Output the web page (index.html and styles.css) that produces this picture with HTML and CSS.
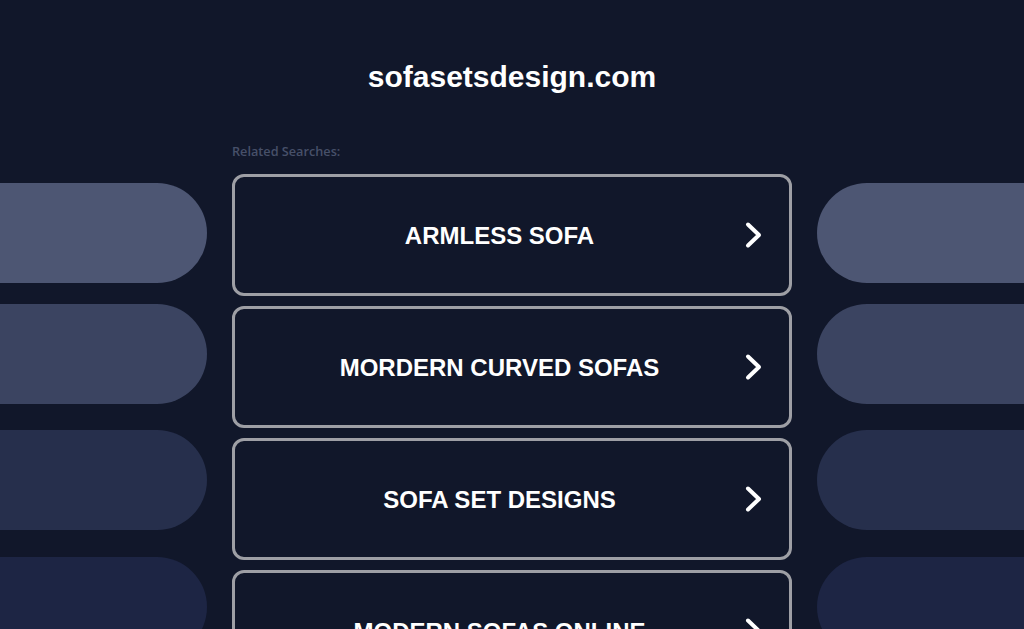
FILE: index.html
```html
<!DOCTYPE html>
<html lang="en">
<head>
<meta charset="utf-8">
<title>sofasetsdesign.com</title>
<link rel="stylesheet" href="styles.css">
</head>
<body>
<header class="header">
  <h1 class="domain">sofasetsdesign.com</h1>
</header>
<main class="layout">
  <p class="label">Related Searches:</p>
  <div class="pills pills-left">
    <div class="pill pill-1"></div>
    <div class="pill pill-2"></div>
    <div class="pill pill-3"></div>
    <div class="pill pill-4"></div>
  </div>
  <div class="links">
    <a class="link" href="#"><span class="link-text">ARMLESS SOFA</span><svg class="chev" width="20" height="28" viewBox="0 0 20 28"><path d="M4 3.5 L15 14 L4 24.5" fill="none" stroke="#fff" stroke-width="4" stroke-linecap="round" stroke-linejoin="round"/></svg></a>
    <a class="link" href="#"><span class="link-text">MORDERN CURVED SOFAS</span><svg class="chev" width="20" height="28" viewBox="0 0 20 28"><path d="M4 3.5 L15 14 L4 24.5" fill="none" stroke="#fff" stroke-width="4" stroke-linecap="round" stroke-linejoin="round"/></svg></a>
    <a class="link" href="#"><span class="link-text">SOFA SET DESIGNS</span><svg class="chev" width="20" height="28" viewBox="0 0 20 28"><path d="M4 3.5 L15 14 L4 24.5" fill="none" stroke="#fff" stroke-width="4" stroke-linecap="round" stroke-linejoin="round"/></svg></a>
    <a class="link" href="#"><span class="link-text">MODERN SOFAS ONLINE</span><svg class="chev" width="20" height="28" viewBox="0 0 20 28"><path d="M4 3.5 L15 14 L4 24.5" fill="none" stroke="#fff" stroke-width="4" stroke-linecap="round" stroke-linejoin="round"/></svg></a>
  </div>
  <div class="pills pills-right">
    <div class="pill pill-1"></div>
    <div class="pill pill-2"></div>
    <div class="pill pill-3"></div>
    <div class="pill pill-4"></div>
  </div>
</main>
</body>
</html>
```
FILE: styles.css
```css
html, body {
  margin: 0;
  padding: 0;
  height: 100%;
  overflow: hidden;
}
body {
  background: #11172a;
  font-family: "Liberation Sans", Arial, sans-serif;
  color: #fff;
}
.header {
  padding-top: 59px;
  text-align: center;
}
.domain {
  margin: 0;
  font-size: 30px;
  line-height: 36px;
  font-weight: bold;
  color: #fff;
}
.layout {
  display: grid;
  grid-template-columns: 207px 560px 207px;
  grid-template-rows: auto auto;
  column-gap: 25px;
  margin-top: 47px;
}
.label {
  grid-column: 2;
  grid-row: 1;
  margin: 0 0 14px 0;
  font-family: "Open Sans", "Liberation Sans", sans-serif;
  font-size: 12.7px;
  line-height: 18px;
  font-weight: 600;
  color: #475069;
}
.pills {
  grid-row: 2;
  display: flex;
  flex-direction: column;
  padding-top: 9px;
}
.pills-left { grid-column: 1; }
.pills-right { grid-column: 3; }
.pill {
  height: 100px;
  flex: none;
}
.pills-left .pill { border-radius: 0 50px 50px 0; }
.pills-right .pill { border-radius: 50px 0 0 50px; }
.pill-1 { background: #4d5673; }
.pill-2 { background: #3b4461; margin-top: 21px; }
.pill-3 { background: #262f4c; margin-top: 26px; }
.pill-4 { background: #1d2544; margin-top: 27px; }
.links {
  grid-column: 2;
  grid-row: 2;
  display: flex;
  flex-direction: column;
  gap: 10px;
}
.link {
  display: flex;
  align-items: center;
  height: 116px;
  border: 3px solid #9e9fa5;
  border-radius: 12px;
  padding: 0 25px 0 20px;
  text-decoration: none;
  color: #fff;
  flex: none;
}
.link-text {
  flex: 1;
  text-align: center;
  font-size: 24px;
  font-weight: bold;
  line-height: 28px;
  padding-top: 2px;
}
.chev {
  flex: none;
  display: block;
}
```
